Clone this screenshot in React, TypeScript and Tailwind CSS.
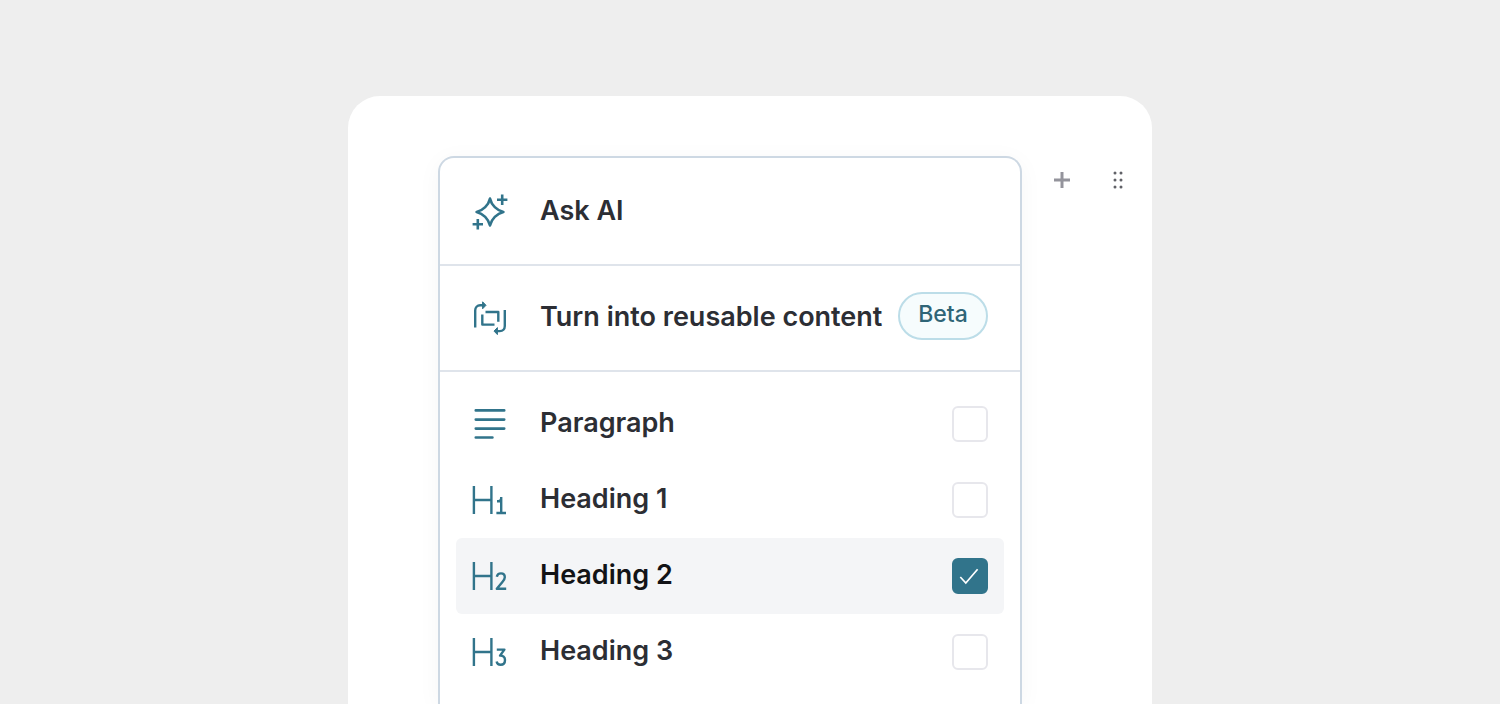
import type { ReactNode } from "react";

const iconProps = {
  viewBox: "0 0 36 36",
  fill: "none",
  stroke: "currentColor",
  strokeWidth: 2.4,
  strokeLinejoin: "round" as const,
  "aria-hidden": true,
  className: "size-9 shrink-0 text-[#31748b]",
};

function SparkleIcon() {
  return (
    <svg {...iconProps} strokeWidth={2.6}>
      <path d="M18 4.6C19 9 21 11.4 22.8 13.2C24.6 15 27 17 31.4 18C27 19 24.6 21 22.8 22.8C21 24.6 19 27 18 31.4C17 27 15 24.6 13.2 22.8C11.4 21 9 19 4.6 18C9 17 11.4 15 13.2 13.2C15 11.4 17 9 18 4.6Z" />
      <path d="M30.2 0.6V11M25 5.8H35.4M5.8 25V35.4M0.6 30.2H11" />
    </svg>
  );
}

function ReusableIcon() {
  return (
    <svg {...iconProps}>
      <path d="M3.2 27.5V10.5C3.2 7.5 5.2 5.3 8.2 5.3H12" />
      <path d="M32.8 10V26C32.8 29 30.8 31.1 27.8 31.1H24" />
      <path
        d="M10.6 1.8L14 5.3L10.6 8.8ZM25.4 27.6L22 31.1L25.4 34.6Z"
        fill="currentColor"
        strokeWidth={1}
      />
      <path d="M10.3 14.5V24.6H22.5M13.5 12H26.3V21.8" />
    </svg>
  );
}

function ParagraphIcon() {
  return (
    <svg {...iconProps} strokeWidth={2.7} strokeLinecap="round">
      <path d="M3.8 4.4H32.2M3.8 13.6H32.2M3.8 22.6H32.2M3.8 31.5H20.4" />
    </svg>
  );
}

const levelPaths = {
  1: "M25 19.2H26.4C28 19.2 29.2 18 29.2 16.2V15M29.2 15V31.4M24.4 31H34",
  2: "M24.8 18.8C25.2 16.8 26.8 15.4 29 15.4C31.4 15.4 32.8 17 32.8 19.2C32.8 21 31.8 22.4 30.4 24L24.8 30.8H34.2",
  3: "M24.8 15.6H32.4L28 21.6C31 21.4 33 23.2 33 26C33 29 31.2 30.8 28.6 30.8C26.4 30.8 25 29.6 24.6 27.6",
};

function HeadingIcon({ level }: { level: 1 | 2 | 3 }) {
  return (
    <svg {...iconProps}>
      <path d="M1.9 4V32M19.4 4V32M1.9 18H19.4" />
      <path d={levelPaths[level]} />
    </svg>
  );
}

const rowClass =
  "flex h-[76px] w-full items-center gap-8 rounded-md px-4 text-left";

function ActionRow({
  icon,
  children,
  badge,
}: {
  icon: ReactNode;
  children: ReactNode;
  badge?: string;
}) {
  return (
    <button type="button" className={rowClass}>
      {icon}
      <span className="flex-1 whitespace-nowrap pb-0.5">{children}</span>
      {badge && (
        <span className="-ml-8 mb-1 flex h-12 w-[90px] items-center justify-center rounded-full border-2 border-[#bcdde8] bg-[#f6fcfd] pb-1 text-[23px] leading-7 font-medium text-[#2f6577]">
          {badge}
        </span>
      )}
    </button>
  );
}

function BlockRow({
  icon,
  label,
  checked = false,
}: {
  icon: ReactNode;
  label: string;
  checked?: boolean;
}) {
  return (
    <label
      className={`${rowClass} ${checked ? "bg-[#f4f5f7] text-[#121316]" : ""}`}
    >
      {icon}
      <span className="flex-1 whitespace-nowrap pb-0.5">{label}</span>
      <span className="grid size-9 shrink-0">
        <input
          type="checkbox"
          defaultChecked={checked}
          className="peer col-start-1 row-start-1 size-9 appearance-none rounded-md border-2 border-[#e7e7ec] bg-white checked:border-[#31748b] checked:bg-[#31748b]"
        />
        <svg
          viewBox="0 0 36 36"
          fill="none"
          stroke="white"
          strokeWidth="1.7"
          aria-hidden
          className="pointer-events-none invisible col-start-1 row-start-1 size-9 peer-checked:visible"
        >
          <path d="M8.3 19L13.8 25L25.6 11.2" />
        </svg>
      </span>
    </label>
  );
}

export default function App() {
  return (
    <main className="flex h-screen flex-col overflow-hidden bg-[#eeeeee] px-6 pt-24 font-['Inter',sans-serif]">
      <section className="mx-auto flex w-full max-w-[804px] flex-1 items-stretch overflow-hidden rounded-t-[32px] bg-white pl-[90px] pr-1.5 pt-[60px]">
        <div className="min-w-0 flex-1 rounded-t-2xl border-2 border-b-0 border-[#cdd8e3] bg-white text-[27px] leading-9 font-semibold text-[#2c2e34] shadow-[0_4px_24px_rgba(0,0,0,0.04)]">
          <div className="border-b-2 border-[#dfe4eb] px-4 pt-4 pb-3.5">
            <ActionRow icon={<SparkleIcon />}>Ask AI</ActionRow>
          </div>
          <div className="border-b-2 border-[#dfe4eb] px-4 py-3.5">
            <ActionRow icon={<ReusableIcon />} badge="Beta">
              Turn into reusable content
            </ActionRow>
          </div>
          <div className="px-4 py-3.5">
            <BlockRow icon={<ParagraphIcon />} label="Paragraph" />
            <BlockRow icon={<HeadingIcon level={1} />} label="Heading 1" />
            <BlockRow icon={<HeadingIcon level={2} />} label="Heading 2" checked />
            <BlockRow icon={<HeadingIcon level={3} />} label="Heading 3" />
          </div>
        </div>
        <div className="ml-3 flex h-12 shrink-0">
          <button
            type="button"
            aria-label="Add block"
            className="flex w-14 items-center justify-center text-[#94949c]"
          >
            <svg viewBox="0 0 16 16" stroke="currentColor" strokeWidth="3" className="size-4">
              <path d="M8 0V16M0 8H16" />
            </svg>
          </button>
          <button
            type="button"
            aria-label="Drag block"
            className="flex w-14 items-center justify-center text-[#606167]"
          >
            <svg viewBox="0 0 12 18" fill="currentColor" className="h-[18px] w-3">
              <circle cx="3" cy="2" r="1.5" />
              <circle cx="9" cy="2" r="1.5" />
              <circle cx="3" cy="9" r="1.5" />
              <circle cx="9" cy="9" r="1.5" />
              <circle cx="3" cy="16" r="1.5" />
              <circle cx="9" cy="16" r="1.5" />
            </svg>
          </button>
        </div>
      </section>
    </main>
  );
}
